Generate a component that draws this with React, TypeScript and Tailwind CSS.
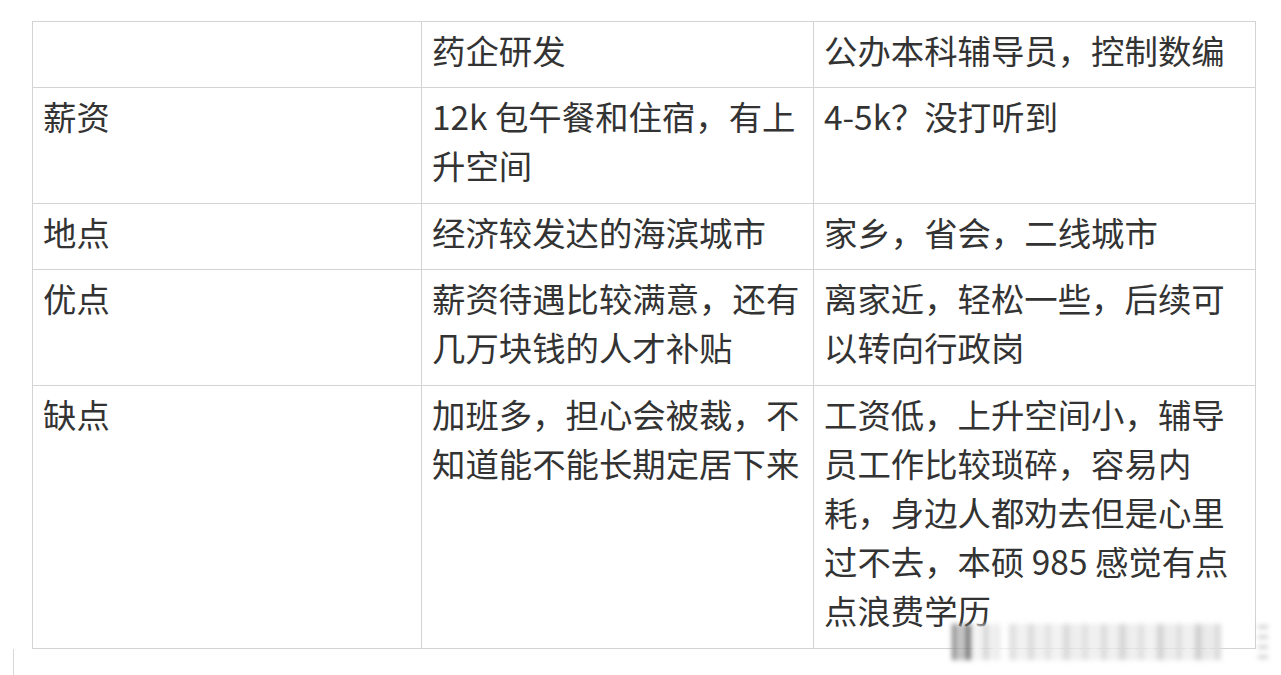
const rows = [
  { label: '', a: '药企研发', b: '公办本科辅导员，控制数编', h: 'h-[66px]' },
  { label: '薪资', a: '12k 包午餐和住宿，有上升空间', b: '4-5k？没打听到', h: 'h-[116px]' },
  { label: '地点', a: '经济较发达的海滨城市', b: '家乡，省会，二线城市', h: 'h-[66px]' },
  { label: '优点', a: '薪资待遇比较满意，还有几万块钱的人才补贴', b: '离家近，轻松一些，后续可以转向行政岗', h: 'h-[116px]' },
  {
    label: '缺点',
    a: '加班多，担心会被裁，不知道能不能长期定居下来',
    b: '工资低，上升空间小，辅导员工作比较琐碎，容易内耗，身边人都劝去但是心里过不去，本硕 985 感觉有点点浪费学历',
    h: 'h-[263px]',
  },
]

const bars = [
  'w-[5px] bg-[#8a8a8a]', 'w-[4px] bg-[#aaa]', 'w-[6px] bg-[#777]', 'w-[8px] bg-[#f2f2f2]', 'w-[6px] bg-[#d4d4d4]',
  'w-[10px] bg-[#eee]', 'w-[4px] bg-[#fff]', 'w-[8px] bg-[#e0e0e0]', 'w-[6px] bg-[#efefef]', 'w-[8px] bg-[#dcdcdc]',
  'w-[5px] bg-[#ececec]', 'w-[8px] bg-[#e2e2e2]', 'w-[6px] bg-[#f0f0f0]', 'w-[9px] bg-[#dcdcdc]', 'w-[6px] bg-[#eaeaea]',
  'w-[8px] bg-[#e0e0e0]', 'w-[7px] bg-[#eeeeee]', 'w-[8px] bg-[#dddddd]', 'w-[6px] bg-[#ededed]', 'w-[9px] bg-[#d8d8d8]',
  'w-[6px] bg-[#eaeaea]', 'w-[8px] bg-[#e0e0e0]', 'w-[7px] bg-[#f0f0f0]', 'w-[9px] bg-[#d6d6d6]', 'w-[6px] bg-[#e8e8e8]',
  'w-[8px] bg-[#dedede]', 'w-[7px] bg-[#eeeeee]', 'w-[9px] bg-[#d2d2d2]', 'w-[6px] bg-[#e6e6e6]', 'w-[8px] bg-[#dcdcdc]',
]

function Cell({ children }: { children: string }) {
  return (
    <td className="border border-[#d3d3d3] px-[10px] pt-[3px] align-top text-[33.4px] leading-[49px] text-[#333]">
      {children}
    </td>
  )
}

export default function App() {
  return (
    <div className="relative h-[675px] w-[1281px] overflow-hidden bg-white font-['Noto_Sans_CJK_SC','Noto_Sans',sans-serif]">
      <div className="pl-[32px] pt-[21px]">
        <table className="w-[1223px] table-fixed border-collapse">
          <colgroup>
            <col className="w-[389px]" />
            <col className="w-[392px]" />
            <col className="w-[442px]" />
          </colgroup>
          <tbody>
            {rows.map((r, i) => (
              <tr key={i} className={r.h}>
                <Cell>{r.label}</Cell>
                <Cell>{r.a}</Cell>
                <Cell>{r.b}</Cell>
              </tr>
            ))}
          </tbody>
        </table>
      </div>
      <div className="ml-[13px] h-[30px] w-[20px] border-l border-[#d8d8d8]" />

      {/* blurred watermark strip */}
      <div className="absolute left-[952px] top-[624px] flex h-[36px] w-[316px] items-stretch gap-[2px] blur-[2.5px]">
        {bars.map((b, i) => (
          <div key={i} className={b} />
        ))}
        <div className="ml-auto flex w-[10px] flex-col justify-between py-[2px]">
          <div className="h-[2px] bg-[#aaa]" />
          <div className="h-[2px] bg-[#aaa]" />
          <div className="h-[2px] bg-[#aaa]" />
          <div className="h-[2px] bg-[#aaa]" />
        </div>
      </div>
    </div>
  )
}
